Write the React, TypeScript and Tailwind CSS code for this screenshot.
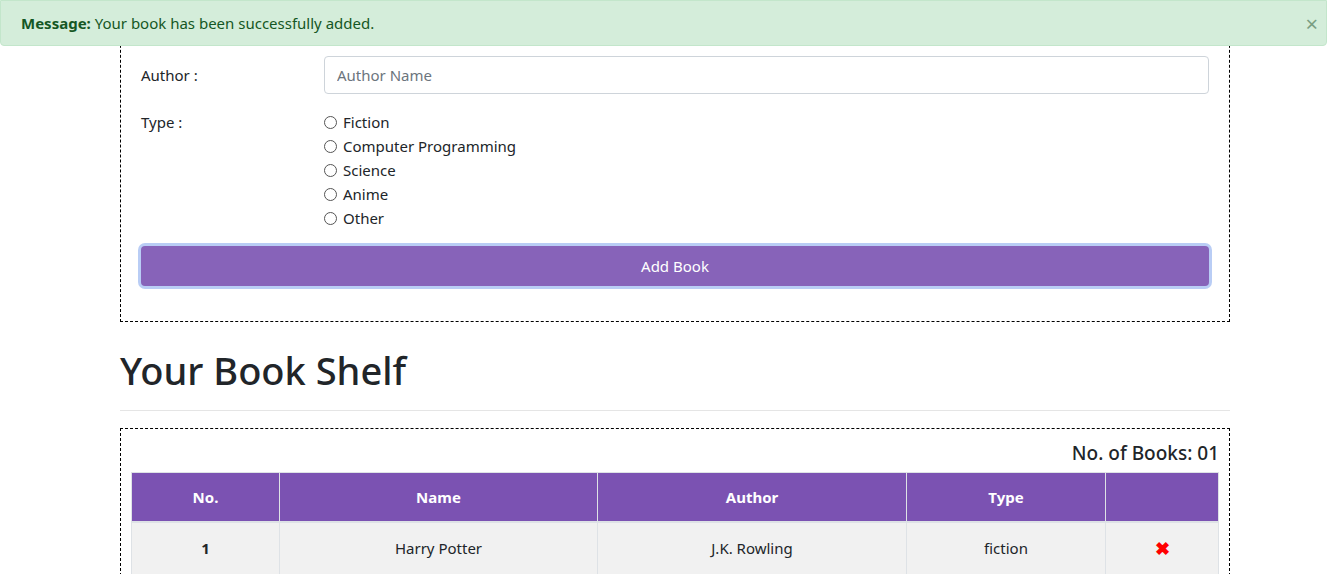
export default function App() {
  const types = ["Fiction", "Computer Programming", "Science", "Anime", "Other"];
  return (
    <div className="relative min-h-screen bg-white text-[#212529] text-[15px]" style={{ fontFamily: '"Noto Sans", "Open Sans", sans-serif' }}>
      {/* Alert overlay */}
      <div className="absolute top-0 left-0 right-0 z-10 h-[46px] flex items-center justify-between px-5 bg-[#d4edda] border border-[#c3e6cb] rounded-b text-[#155724]">
        <span><b>Message:</b> Your book has been successfully added.</span>
        <span className="text-[22px] leading-none text-[#7a9e82] -mr-3">×</span>
      </div>

      <div className="mx-auto w-[1110px] ml-[120px]">
        <div className="border border-dashed border-black border-t-0 pt-[56px] pb-[35px] px-5">
          <div className="flex items-center">
            <label className="w-[183px]">Author :</label>
            <input placeholder="Author Name" className="flex-1 h-[38px] px-3 border border-[#ced4da] rounded placeholder-[#6c757d] outline-none" />
          </div>
          <div className="flex mt-[16px]">
            <label className="w-[183px] pt-[1px]">Type :</label>
            <div className="flex flex-col">
              {types.map((t) => (
                <label key={t} className="flex items-center h-[24px] gap-[6px]">
                  <span className="w-[13px] h-[13px] rounded-full border border-[#555]" />
                  {t}
                </label>
              ))}
            </div>
          </div>
          <button className="mt-[16px] w-full h-[40px] rounded bg-[#8763b9] text-white ring-[3px] ring-[#b9cdf5]">Add Book</button>
        </div>

        <h1 className="mt-[22px] text-[38px] font-medium leading-[52px]">Your Book Shelf</h1>
        <hr className="mt-[14px] border-[#e5e5e5]" />

        <div className="mt-[17px] border border-dashed border-black px-[10px] pt-[8px]">
          <div className="text-right text-[19px] font-medium leading-[32px] mb-[3px]">No. of Books: 01</div>
          <table className="w-full border-collapse text-center">
            <thead>
              <tr className="bg-[#7b52b2] text-white font-bold h-[49px]">
                <th className="w-[148px] border border-[#dee2e6]">No.</th>
                <th className="w-[318px] border border-[#dee2e6]">Name</th>
                <th className="w-[309px] border border-[#dee2e6]">Author</th>
                <th className="w-[199px] border border-[#dee2e6]">Type</th>
                <th className="border border-[#dee2e6]"></th>
              </tr>
            </thead>
            <tbody>
              <tr className="bg-[#f1f1f1] h-[53px] border-t-2 border-[#dee2e6]">
                <td className="border border-[#dee2e6] font-bold">1</td>
                <td className="border border-[#dee2e6]">Harry Potter</td>
                <td className="border border-[#dee2e6]">J.K. Rowling</td>
                <td className="border border-[#dee2e6]">fiction</td>
                <td className="border border-[#dee2e6] text-[#ff0000] font-bold text-[18px]">✖</td>
              </tr>
            </tbody>
          </table>
        </div>
      </div>
    </div>
  );
}
